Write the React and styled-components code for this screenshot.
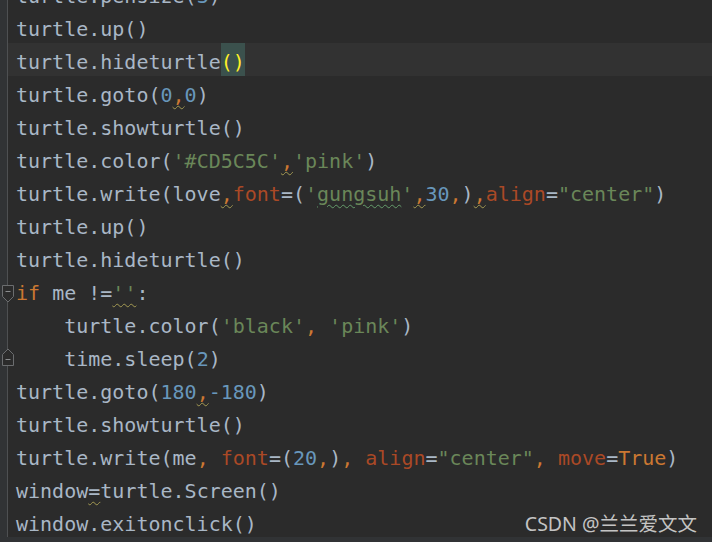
import React from 'react'
import styled, { createGlobalStyle } from 'styled-components'

const GlobalStyle = createGlobalStyle`
  html, body {
    margin: 0;
    padding: 0;
    background: #2b2b2b;
    overflow: hidden;
  }
`

const colors = {
  plain: '#a9b7c6',
  kw: '#cc7832',
  str: '#6a8759',
  num: '#6897bb',
  param: '#aa4926',
  brace: '#ffef28',
}

const Window = styled.div`
  position: relative;
  width: 712px;
  height: 542px;
  background: #2b2b2b;
  display: flex;
  flex-direction: column;
  overflow: hidden;
`

const Editor = styled.div`
  height: 537px;
  overflow: hidden;
`

const Lines = styled.div`
  margin-top: -23px;
  display: flex;
  flex-direction: column;
`

const Row = styled.div`
  display: flex;
  height: 33px;
`

const Gutter = styled.div`
  position: relative;
  width: 7px;
  flex: none;
  background: #313335;
  border-right: 1px solid #4e5052;
`

const Fold = styled.svg`
  position: absolute;
  left: 1px;
  top: ${p => (p.$up ? '8px' : '11px')};
`

const Code = styled.div`
  flex: 1;
  height: 33px;
  padding-left: 8px;
  background: ${p => (p.$current ? '#323232' : 'transparent')};
  font-family: "DejaVu Sans Mono", "Liberation Mono", monospace;
  font-size: 20px;
  line-height: 39px;
  white-space: pre;
  color: ${colors.plain};
`

const Tok = styled.span`
  color: ${p => colors[p.$k] || colors.plain};
`

const Match = styled.span`
  color: ${colors.brace};
  background: #3b514d;
  display: inline-block;
  height: 33px;
  line-height: 39px;
  vertical-align: top;
`

const Warn = styled.span`
  text-decoration-line: underline;
  text-decoration-style: wavy;
  text-decoration-color: ${p => (p.$typo ? '#659c6b' : '#a39a52')};
  text-decoration-thickness: 1px;
  text-underline-offset: 3px;
`

const BottomBar = styled.div`
  height: 5px;
  background: #313335;
`

const Watermark = styled.div`
  position: absolute;
  right: 15px;
  bottom: 5px;
  font-family: "Noto Sans", "Noto Sans CJK SC", sans-serif;
  font-size: 19.5px;
  color: rgba(225, 225, 225, 0.85);
`

const FoldDown = () => (
  <Fold width="14" height="18" viewBox="0 0 14 18">
    <path d="M1.5 0.5 H12.5 V11.5 L7 17 L1.5 11.5 Z" fill="#2b2b2b" stroke="#6b6d6f" />
    <path d="M4.5 6.5 H9.5" stroke="#8a8c8e" />
  </Fold>
)

const FoldUp = () => (
  <Fold $up width="14" height="18" viewBox="0 0 14 18">
    <path d="M1.5 17.5 H12.5 V6.5 L7 1 L1.5 6.5 Z" fill="#2b2b2b" stroke="#6b6d6f" />
    <path d="M4.5 11.5 H9.5" stroke="#8a8c8e" />
  </Fold>
)

const Comma = ({ warn }) =>
  warn ? <Warn><Tok $k="kw">,</Tok></Warn> : <Tok $k="kw">,</Tok>

const lines = [
  { code: <>turtle.pensize(<Tok $k="num">3</Tok>)</> },
  { code: <>turtle.up()</> },
  { current: true, code: <>turtle.hideturtle<Match>()</Match></> },
  { code: <>turtle.goto(<Tok $k="num">0</Tok><Comma warn /><Tok $k="num">0</Tok>)</> },
  { code: <>turtle.showturtle()</> },
  { code: <>turtle.color(<Tok $k="str">'#CD5C5C'</Tok><Comma warn /><Tok $k="str">'pink'</Tok>)</> },
  {
    code: (
      <>
        turtle.write(love<Comma warn /><Tok $k="param">font</Tok>=(<Tok $k="str">'<Warn $typo>gungsuh</Warn>'</Tok>
        <Comma warn /><Tok $k="num">30</Tok><Comma />)<Comma warn /><Tok $k="param">align</Tok>=<Tok $k="str">"center"</Tok>)
      </>
    ),
  },
  { code: <>turtle.up()</> },
  { code: <>turtle.hideturtle()</> },
  { fold: 'down', code: <><Tok $k="kw">if</Tok> me !=<Warn><Tok $k="str">''</Tok></Warn>:</> },
  { code: <>    turtle.color(<Tok $k="str">'black'</Tok><Tok $k="kw">,</Tok> <Tok $k="str">'pink'</Tok>)</> },
  { fold: 'up', code: <>    time.sleep(<Tok $k="num">2</Tok>)</> },
  { code: <>turtle.goto(<Tok $k="num">180</Tok><Comma warn /><Tok $k="num">-180</Tok>)</> },
  { code: <>turtle.showturtle()</> },
  {
    code: (
      <>
        turtle.write(me<Tok $k="kw">,</Tok> <Tok $k="param">font</Tok>=(<Tok $k="num">20</Tok><Tok $k="kw">,</Tok>)<Tok $k="kw">,</Tok>{' '}
        <Tok $k="param">align</Tok>=<Tok $k="str">"center"</Tok><Tok $k="kw">,</Tok> <Tok $k="param">move</Tok>=<Tok $k="kw">True</Tok>)
      </>
    ),
  },
  { code: <>window<Warn>=</Warn>turtle.Screen()</> },
  { code: <>window.exitonclick()</> },
]

export default function App() {
  return (
    <>
      <GlobalStyle />
      <Window>
        <Editor>
          <Lines>
            {lines.map((line, i) => (
              <Row key={i}>
                <Gutter>
                  {line.fold === 'down' && <FoldDown />}
                  {line.fold === 'up' && <FoldUp />}
                </Gutter>
                <Code $current={line.current}>{line.code}</Code>
              </Row>
            ))}
          </Lines>
        </Editor>
        <BottomBar />
        <Watermark>CSDN @兰兰爱文文</Watermark>
      </Window>
    </>
  )
}
